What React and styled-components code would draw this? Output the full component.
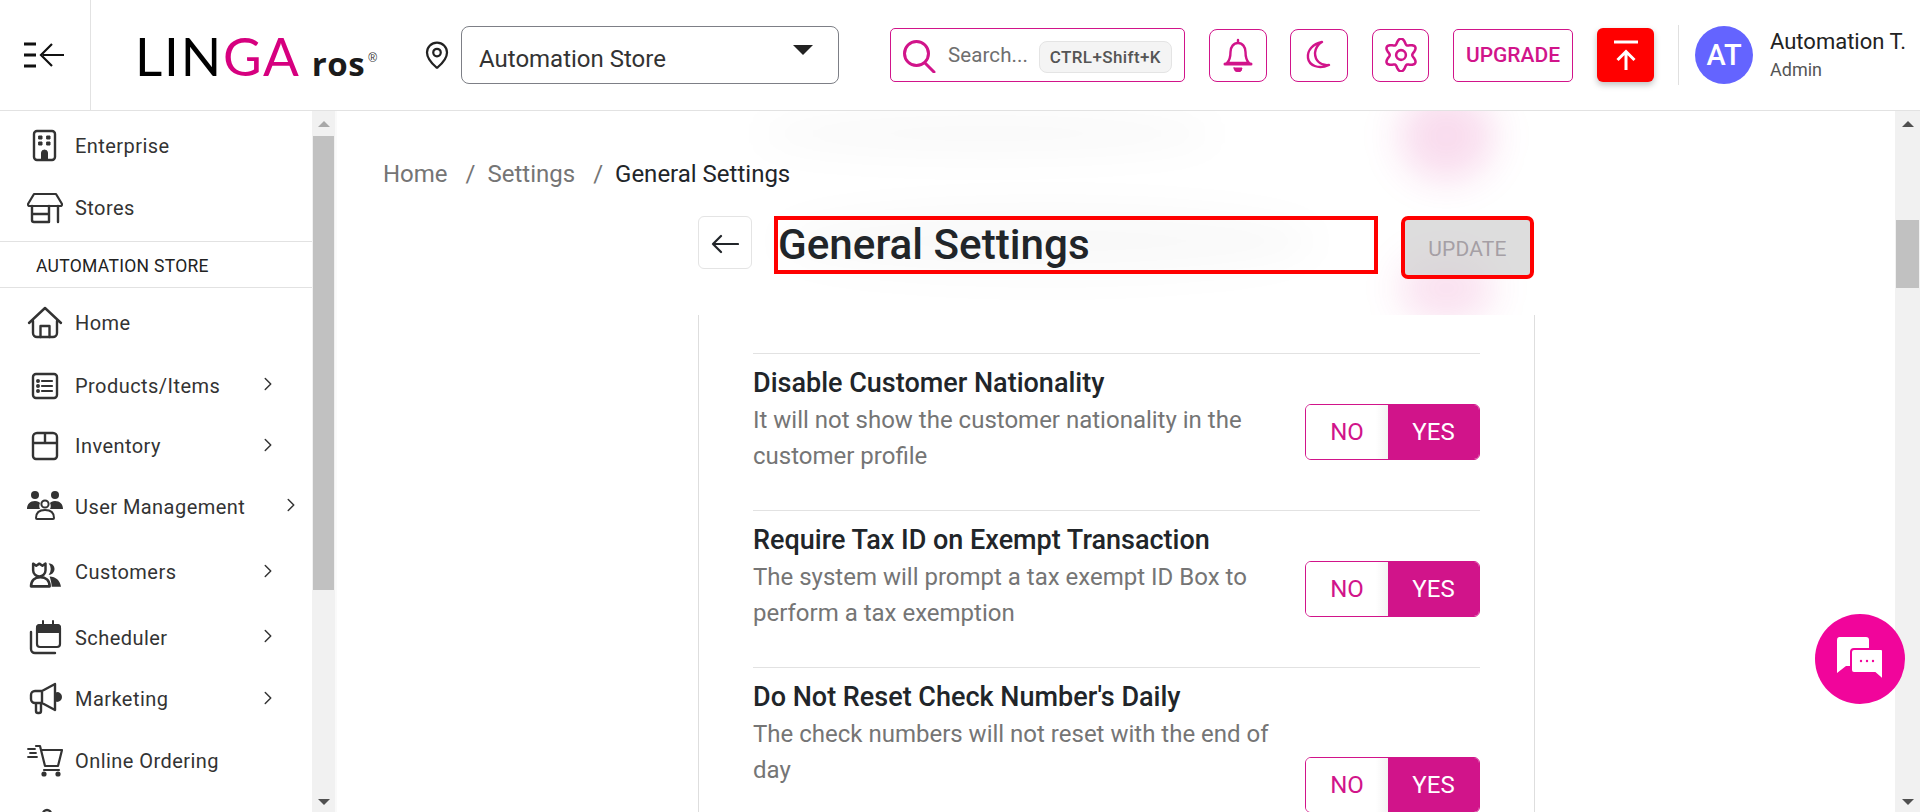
import React from 'react';
import styled, { createGlobalStyle } from 'styled-components';
import { MapPin, ChevronRight } from 'lucide-react';

const PINK = '#d1148a';
const INK = '#212529';

const Global = createGlobalStyle`
  html, body { margin: 0; padding: 0; height: 100%; overflow: hidden; background: #fff; }
  body { font-family: Roboto, "Liberation Sans", sans-serif; color: ${INK}; }
  * { box-sizing: border-box; }
`;

const Page = styled.div`
  height: 812px; display: flex; flex-direction: column; overflow: hidden; position: relative;
`;

/* header */
const Header = styled.header`
  height: 111px; flex: none; display: flex; align-items: center; border-bottom: 1px solid #e2e2e2; background: #fff;
`;
const MenuCell = styled.div`
  width: 91px; height: 110px; flex: none; border-right: 1px solid #e2e2e2; display: flex; align-items: center; padding-left: 23px;
`;
const Logo = styled.div`
  width: 290px; margin-left: 44px; flex: none; display: flex; align-items: baseline; font-family: Lato, sans-serif; line-height: 1; white-space: nowrap;
`;
const LogoMain = styled.span`
  font-size: 53px; font-weight: 400; color: #000; letter-spacing: 1.8px;
  & > b { font-weight: 400; color: #d6007f; }
`;
const LogoSub = styled.span`
  font-size: 33px; font-weight: 700; color: #1b1b1b; margin-left: 11px; font-family: "Open Sans", sans-serif; letter-spacing: .5px;
`;
const LogoMark = styled.sup`
  font-size: 12px; color: #333; margin-left: 3px; position: relative; top: -14px; font-family: "Liberation Sans", sans-serif; vertical-align: baseline;
`;
const PinBox = styled.div`
  width: 39px; margin-left: -3px; flex: none; color: #222; display: flex;
`;
const StoreSelect = styled.div`
  width: 378px; height: 58px; flex: none; margin-top: -1px; border: 1px solid #7d7f86; border-radius: 8px; display: flex; align-items: center; justify-content: space-between; padding: 8px 25px 0 17px; font-size: 24px; color: #333;
`;
const Caret = styled.span`
  width: 0; height: 0; border-left: 10px solid transparent; border-right: 10px solid transparent; border-top: 10px solid #222; margin-bottom: 17px;
`;
const SearchBox = styled.div`
  width: 295px; height: 54px; margin-left: 51px; margin-top: -1px; flex: none; border: 1px solid ${PINK}; border-radius: 5px; display: flex; align-items: center; padding: 0 12px 0 12px; color: #6f6f6f; font-size: 20.5px;
  & > svg { color: ${PINK}; margin: 4px 12px 0 0; flex: none; }
`;
const SearchText = styled.span`
  flex: 1; white-space: nowrap; letter-spacing: .1px;
`;
const Kbd = styled.span`
  height: 32px; margin-top: 4px; padding: 0 10px; background: #f4f4f4; border: 1px solid #e4e4e4; border-radius: 8px; font-size: 17px; font-weight: 500; color: #555; display: flex; align-items: center; white-space: nowrap; letter-spacing: .4px;
`;
const IconBtn = styled.div`
  width: ${p => p.$w || 58}px; height: 53px; margin-left: ${p => p.$ml || 24}px; flex: none; border: 1px solid ${PINK}; border-radius: 8px; display: flex; align-items: center; justify-content: center; color: ${PINK};
`;
const UpgradeBtn = styled.div`
  width: 120px; height: 53px; margin-left: 24px; flex: none; border: 1px solid ${PINK}; border-radius: 5px; display: flex; align-items: center; justify-content: center; color: ${PINK}; font-size: 21px; font-weight: 460;
`;
const RedBtn = styled.div`
  width: 57px; height: 54px; margin-left: 24px; flex: none; background: #ff0000; border-radius: 6px; box-shadow: 0 3px 6px rgba(0,0,0,.25); display: flex; align-items: center; justify-content: center;
`;
const VDivider = styled.div`
  width: 1px; height: 60px; margin-left: 24px; background: #e0e0e0; flex: none;
`;
const Avatar = styled.div`
  width: 58px; height: 58px; margin-left: 16px; flex: none; border-radius: 50%; background: #6464ff; color: #fff; font-size: 29px; font-weight: 500; display: flex; align-items: center; justify-content: center;
`;
const UserBox = styled.div`
  margin-left: 17px; display: flex; flex-direction: column; gap: 6px; white-space: nowrap;
`;
const UserName = styled.div`
  font-size: 22px; line-height: 24px; color: #222;
`;
const UserRole = styled.div`
  font-size: 18px; line-height: 20px; color: #555;
`;

/* body */
const Body = styled.div`
  flex: 1; display: flex; min-height: 0;
`;
const Sidebar = styled.aside`
  width: 312px; flex: none; overflow: hidden; background: #fff; padding-top: 4px;
`;
const NavItem = styled.div`
  height: ${p => p.$h}px; flex: none; display: flex; align-items: center; font-size: 20px; color: #333; letter-spacing: .45px; white-space: nowrap;
`;
const NavIcon = styled.span`
  width: 60px; margin-left: 15px; flex: none; display: flex; justify-content: center; color: #333; padding-top: ${p => p.$dy || 0}px;
`;
const NavChevron = styled.span`
  display: flex; color: #333; margin-left: auto; margin-right: ${p => p.$mr || 33}px; margin-top: -3px;
`;
const SectionLabel = styled.div`
  height: 47px; border-top: 1px solid #e2e2e2; border-bottom: 1px solid #e2e2e2; display: flex; align-items: center; padding: 2px 0 0 36px; font-size: 17.5px; font-weight: 400; color: #222; letter-spacing: .3px; margin: 2px 0 4px;
`;
const Track = styled.div`
  width: ${p => p.$w}px; flex: none; background: #f1f1f1; display: flex; flex-direction: column; align-items: center; justify-content: space-between; overflow: hidden; position: relative; border-right: ${p => p.$edge ? '2px solid #fafafa' : 'none'};
`;
const Arrow = styled.span`
  width: 0; height: 0; flex: none; border-left: 6px solid transparent; border-right: 6px solid transparent;
  ${p => p.$up ? `border-bottom: 6px solid ${p.$c || '#a8a8a8'}; margin-top: 10px;` : `border-top: 6px solid ${p.$c || '#505050'}; margin-bottom: 7px;`}
`;
const Thumb = styled.span`
  position: absolute; left: 1px; right: 1px; background: #c1c1c1;
`;

/* main */
const Main = styled.main`
  flex: 1; min-width: 0; position: relative; overflow: hidden; background: #fff; padding-left: 46px;
`;
const Blob = styled.span`
  position: absolute; border-radius: 50%; filter: blur(${p => p.$b || 18}px);
  background: ${p => p.$c || 'rgba(0,0,0,.025)'};
`;
const Crumbs = styled.nav`
  position: relative; height: 105px; padding-top: 46px; display: flex; align-items: flex-start; gap: 18px; font-size: 24px; line-height: 34px; color: #757575;
  & > b { font-weight: 400; color: ${INK}; }
`;
const CrumbSep = styled.span`
  margin-right: -6px;
`;
const Column = styled.div`
  position: relative; width: 837px; margin-left: 315px;
`;
const TitleRow = styled.div`
  height: 99px; display: flex; align-items: flex-start;
`;
const BackBtn = styled.div`
  width: 54px; height: 53px; flex: none; background: #fff; border: 1px solid #e4e4e4; border-radius: 6px; display: flex; align-items: center; justify-content: center; color: ${INK}; padding-top: 3px;
`;
const TitleBox = styled.h1`
  width: 604px; height: 58px; margin: 0 0 0 22px; flex: none; border: 4px solid #ff0000; padding: 1px 0 0; font-size: 42.2px; line-height: 48px; font-weight: 480; color: ${INK}; white-space: nowrap;
`;
const UpdateBtn = styled.div`
  width: 133px; height: 63px; margin-left: 23px; flex: none; background: rgba(210,210,210,.75); border: 4px solid #ff0000; border-radius: 7px; display: flex; align-items: center; justify-content: center; color: #a59fa5; font-size: 21px; padding-top: 2px; letter-spacing: .2px;
`;
const Card = styled.section`
  border-left: 1px solid #dedede; border-right: 1px solid #dedede; height: 500px; padding: 38px 54px 0 54px; background: #fff;
`;
const SettingRow = styled.div`
  border-top: 1px solid #e2e2e2; display: flex; justify-content: space-between; height: 157px; padding-top: 11px;
  &:nth-child(3) { height: 200px; }
`;
const SettingText = styled.div`
  width: 520px;
`;
const SettingTitle = styled.div`
  font-size: 27px; line-height: 36px; font-weight: 480; color: ${INK}; margin-bottom: 1px;
`;
const SettingDesc = styled.div`
  font-size: 24px; line-height: 36px; font-weight: 400; color: #757575;
`;
const Toggle = styled.div`
  width: 175px; height: 56px; flex: none; margin-top: ${p => p.$mt || 39}px; display: flex; border: 1px solid ${PINK}; border-radius: 6px; overflow: hidden; font-size: 24px;
`;
const ToggleNo = styled.div`
  width: 82px; display: flex; align-items: center; justify-content: center; color: ${PINK}; background: linear-gradient(90deg, #fff 85%, #f3f3f3);
`;
const ToggleYes = styled.div`
  flex: 1; display: flex; align-items: center; justify-content: center; color: #fff; background: ${PINK};
`;
const ChatFab = styled.div`
  position: absolute; left: 1815px; top: 614px; width: 90px; height: 90px; border-radius: 50%; background: #f1059b; display: flex; align-items: center; justify-content: center;
`;

const S = { fill: 'none', stroke: 'currentColor', strokeWidth: 2, strokeLinecap: 'round', strokeLinejoin: 'round' };
const I = ({ children, w = 36, h = 36, vb = '0 0 36 36' }) => <svg width={w} height={h} viewBox={vb} {...S}>{children}</svg>;

const gearPath = (() => {
  const pts = [];
  for (let i = 0; i < 120; i++) {
    const a = (i / 120) * Math.PI * 2;
    const r = 13 + 2.4 * Math.cos(6 * a);
    pts.push(`${(16 + r * Math.sin(a)).toFixed(2)} ${(16 - r * Math.cos(a)).toFixed(2)}`);
  }
  return `M${pts.join('L')}Z`;
})();

const BellI = () => <I w={30} h={34} vb="0 0 30 34">
  <path d="M15 2v3M4 25c3-3 3.500-7 3.500-11C7.500 9 10.500 5 15 5s7.500 4 7.500 9c0 4 .5 8 3.500 11z" strokeWidth="2.4" />
  <path d="M2 26h26" strokeWidth="3" />
  <path d="M11 30h8a4 4 0 0 1-8 0z" fill="currentColor" strokeWidth="1" />
</I>;
const MoonI = () => <I w={32} h={32} vb="0 0 32 32">
  <path d="M19 3C10 5 4 11 5 19c1 7 10 12 21 7-9 1-14-5-14-12 0-4 3-9 7-11z" strokeWidth="2.4" />
</I>;
const GearI = () => <I w={34} h={34} vb="0 0 32 32">
  <path d={gearPath} strokeWidth="2.4" />
  <circle cx="16" cy="16" r="4.6" strokeWidth="2.4" />
</I>;
const SearchI = () => <svg width="33" height="33" viewBox="0 0 33 33" fill="none" stroke="currentColor" strokeWidth="3" strokeLinecap="round">
  <circle cx="13.500" cy="13.500" r="12" /><path d="M22 23l9 9" />
</svg>;

const Enterprise = () => <I>
  <rect x="7" y="3" width="21" height="29" rx="3" strokeWidth="2.4" />
  <path d="M12 8h3v3h-3zM20 8h3v3h-3zM12 14h3v3h-3zM20 14h3v3h-3zM14.500 31v-6a3 3 0 0 1 6 0v6z" fill="currentColor" strokeWidth="1" />
</I>;
const Store = () => <I>
  <path d="M7 4h22l6 10a2 2 0 0 1-1 2H2a2 2 0 0 1-1-2z" strokeWidth="2.2" />
  <path d="M5 16v14a2 2 0 0 0 2 2h15V16M5 24h17M31 16v16" strokeWidth="2.4" />
</I>;
const HomeI = () => <I>
  <path d="M2 18 18 3l16 15M6 16v12a4 4 0 0 0 4 4h16a4 4 0 0 0 4-4V16" strokeWidth="2.4" />
  <path d="M13.500 32V21h9v11" strokeWidth="2.4" />
</I>;
const ListI = () => <I>
  <rect x="6" y="6" width="24" height="24" rx="3" strokeWidth="2.4" />
  <path d="M15 13h10M15 18h10M15 23h10" strokeWidth="2.2" />
  <circle cx="11" cy="13" r="1" fill="currentColor" /><circle cx="11" cy="18" r="1" fill="currentColor" /><circle cx="11" cy="23" r="1" fill="currentColor" />
</I>;
const BoxI = () => <I>
  <path d="M10 5h16a4 4 0 0 1 4 4v19a3 3 0 0 1-3 3H9a3 3 0 0 1-3-3V9a4 4 0 0 1 4-4zM6 15h24M18 5v10" strokeWidth="2.4" />
</I>;
const UsersI = () => <I>
  <circle cx="8" cy="6" r="4" fill="currentColor" stroke="none" /><circle cx="28" cy="6" r="4" fill="currentColor" stroke="none" />
  <path d="M0 20c0-5 3-8 8-8 3 0 4 1 5 2-1 2-1 4 0 6zM36 20c0-5-3-8-8-8-3 0-4 1-5 2 1 2 1 4 0 6z" fill="currentColor" stroke="none" />
  <circle cx="18" cy="15" r="3.600" strokeWidth="2" />
  <path d="M9 29c0-6 4-8 9-8s9 2 9 8c0 .6-.4 1-1 1H10c-.6 0-1-.4-1-1z" strokeWidth="2" />
</I>;
const CustomersI = () => <I w={32} h={26} vb="0 0 31 25">
  <path d="M4 1.500l3 2 3-2 3 2 3-2V8a6 6 0 0 1-12 0z" strokeWidth="2.4" />
  <path d="M19 1a5.500 5.500 0 0 1 0 11.500A9 9 0 0 0 19 1zM20 14c6 0 10 4 11 10h-9c0-3-1-7-2-10z" fill="currentColor" stroke="none" />
  <path d="M2 23.500c0-6 4-9 9-9s9 3 9 9z" strokeWidth="2.6" />
</I>;
const SchedI = () => <I>
  <rect x="10" y="5" width="23" height="22" rx="3" strokeWidth="2.2" />
  <path d="M10 8a3 3 0 0 1 3-3h17a3 3 0 0 1 3 3v4H10z" fill="currentColor" />
  <path d="M16 1v4M26 1v4" strokeWidth="2" />
  <path d="M4 12v17a4 4 0 0 0 4 4h20" strokeWidth="2.4" />
</I>;
const MegaI = () => <I>
  <path d="M28 3 15 10H8a4 4 0 0 0-4 4v4a4 4 0 0 0 4 4h7l13 7zM15 10v12M9 22v8a2 2 0 0 0 2 2h1a2 2 0 0 0 2-2v-8" strokeWidth="2.4" />
  <path d="M30 12a4 4 0 0 1 0 8z" fill="currentColor" />
</I>;
const CartI = () => <I>
  <path d="M9 3h4l5 20h13l4-16H14M17 27h15" strokeWidth="2.2" />
  <path d="M1 6h7M3 10h6M1 14h9" strokeWidth="1.800" />
  <circle cx="17" cy="31" r="1.600" fill="currentColor" /><circle cx="31" cy="31" r="1.600" fill="currentColor" />
</I>;
const Partial = () => <I><circle cx="20" cy="8" r="4" strokeWidth="2.4" /><path d="M18 12 8 30" strokeWidth="2.4" /></I>;

const navTop = [['Enterprise', <Enterprise />, 0, 62], ['Stores', <Store />, 0, 62]];
const navBottom = [
  ['Home', <HomeI />, 0, 61],
  ['Products/Items', <ListI />, 1, 65],
  ['Inventory', <BoxI />, 1, 56],
  ['User Management', <UsersI />, 2, 65],
  ['Customers', <CustomersI />, 1, 66, 5],
  ['Scheduler', <SchedI />, 1, 65],
  ['Marketing', <MegaI />, 1, 58],
  ['Online Ordering', <CartI />, 0, 66],
  ['', <Partial />, 0, 60],
];

const Row = ({ item }) => (
  <NavItem $h={item[3]}>
    <NavIcon $dy={item[4]}>{item[1]}</NavIcon>
    {item[0]}
    {item[2] > 0 && <NavChevron $mr={item[2] === 2 ? 10 : 33}><ChevronRight size={22} strokeWidth={1.6} /></NavChevron>}
  </NavItem>
);

const settings = [
  ['Disable Customer Nationality', 'It will not show the customer nationality in the customer profile', 39],
  ['Require Tax ID on Exempt Transaction', 'The system will prompt a tax exempt ID Box to perform a tax exemption', 39],
  ["Do Not Reset Check Number's Daily", 'The check numbers will not reset with the end of day', 78],
];

export default function App() {
  return (
    <Page>
      <Global />
      <Header>
        <MenuCell>
          <svg width="42" height="28" viewBox="0 0 42 28" fill="none" stroke="#111">
            <path d="M1 3h12M1 14h12M1 25h12" strokeWidth="3" />
            <path d="M41 14H20M29 3 18 14l11 11" strokeWidth="2.2" />
          </svg>
        </MenuCell>
        <Logo>
          <LogoMain>LIN<b>GA</b></LogoMain>
          <LogoSub>ros</LogoSub>
          <LogoMark>®</LogoMark>
        </Logo>
        <PinBox><MapPin size={30} strokeWidth={1.8} /></PinBox>
        <StoreSelect>Automation Store<Caret /></StoreSelect>
        <SearchBox>
          <SearchI />
          <SearchText>Search...</SearchText>
          <Kbd>CTRL+Shift+K</Kbd>
        </SearchBox>
        <IconBtn><BellI /></IconBtn>
        <IconBtn $ml={23}><MoonI /></IconBtn>
        <IconBtn $w={57}><GearI /></IconBtn>
        <UpgradeBtn>UPGRADE</UpgradeBtn>
        <RedBtn>
          <svg width="26" height="30" viewBox="0 0 26 30" fill="none" stroke="#fff" strokeWidth="3">
            <path d="M1 2h24M13 30V12M4.500 20l8.500-8.500 8.500 8.500" />
          </svg>
        </RedBtn>
        <VDivider />
        <Avatar>AT</Avatar>
        <UserBox>
          <UserName>Automation T.</UserName>
          <UserRole>Admin</UserRole>
        </UserBox>
      </Header>
      <Body>
        <Sidebar>
          {navTop.map(n => <Row key={n[0]} item={n} />)}
          <SectionLabel>AUTOMATION STORE</SectionLabel>
          {navBottom.map((n, i) => <Row key={i} item={n} />)}
        </Sidebar>
        <Track $w={25} $edge>
          <Arrow $up />
          <Thumb style={{ top: 25, height: 454 }} />
          <Arrow />
        </Track>
        <Main>
          <Blob $c="rgba(214,20,138,.15)" style={{ left: 1062, top: -20, width: 95, height: 90 }} />
          <Blob $c="rgba(214,20,138,.13)" style={{ left: 1062, top: 142, width: 95, height: 70 }} />
          <Blob style={{ left: 420, top: 0, width: 460, height: 45 }} />
          <Blob style={{ left: 440, top: 95, width: 540, height: 70 }} />
          <Crumbs>
            <span>Home</span><CrumbSep>/</CrumbSep><span>Settings</span><CrumbSep>/</CrumbSep><b>General Settings</b>
          </Crumbs>
          <Column>
            <TitleRow>
              <BackBtn>
                <svg width="28" height="20" viewBox="0 0 28 20" fill="none" stroke="currentColor" strokeWidth="2.2" strokeLinecap="round" strokeLinejoin="round">
                  <path d="M27 10H2M10 2l-8 8 8 8" />
                </svg>
              </BackBtn>
              <TitleBox>General Settings</TitleBox>
              <UpdateBtn>UPDATE</UpdateBtn>
            </TitleRow>
            <Card>
              {settings.map(s => (
                <SettingRow key={s[0]}>
                  <SettingText>
                    <SettingTitle>{s[0]}</SettingTitle>
                    <SettingDesc>{s[1]}</SettingDesc>
                  </SettingText>
                  <Toggle $mt={s[2]}>
                    <ToggleNo>NO</ToggleNo>
                    <ToggleYes>YES</ToggleYes>
                  </Toggle>
                </SettingRow>
              ))}
            </Card>
          </Column>
        </Main>
        <Track $w={25}>
          <Arrow $up $c="#505050" />
          <Thumb style={{ top: 109, height: 68 }} />
          <Arrow />
        </Track>
      </Body>
      <ChatFab>
        <svg width="48" height="44" viewBox="0 0 48 44">
          <path d="M3 0h27a3 3 0 0 1 3 3v26H10l-9 7V3a3 3 0 0 1 2-3z" fill="#fff" />
          <path d="M18 12h27a2 2 0 0 1 2 2v29l-8-7H18a3 3 0 0 1-3-3V15a3 3 0 0 1 3-3z" fill="#fff" stroke="#f1059b" strokeWidth="2" />
          <circle cx="25" cy="24" r="1.200" fill="#f1059b" /><circle cx="31" cy="24" r="1.200" fill="#f1059b" /><circle cx="37" cy="24" r="1.200" fill="#f1059b" />
        </svg>
      </ChatFab>
    </Page>
  );
}
